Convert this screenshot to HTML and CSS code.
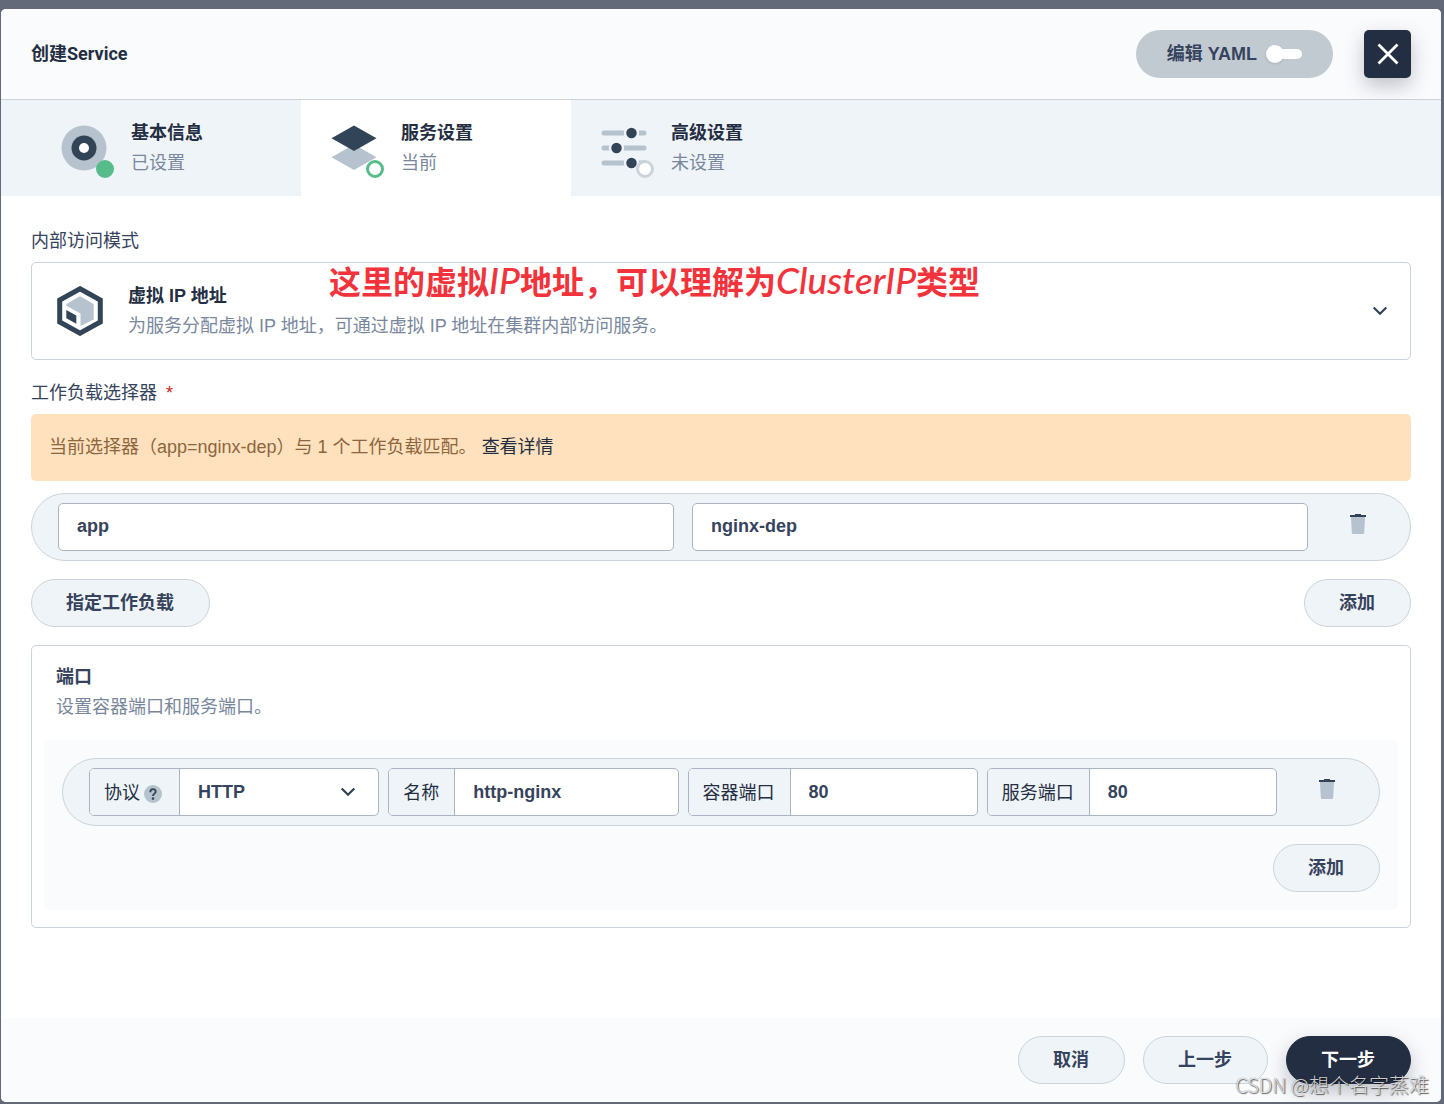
FILE: index.html
```html
<!DOCTYPE html>
<html lang="zh-CN">
<head>
<meta charset="utf-8">
<meta name="viewport" content="width=device-width, initial-scale=1">
<title>创建Service</title>
<link rel="stylesheet" href="styles.css">
</head>
<body>
<div class="modal" role="dialog" aria-labelledby="modal-title">
  <header class="modal-header">
    <h1 class="modal-title" id="modal-title">创建Service</h1>
    <label class="yaml-toggle" for="yaml">编辑 YAML<input class="switch" type="checkbox" role="switch" id="yaml"></label>
    <button class="close" type="button" aria-label="关闭">
      <svg width="24" height="24" viewBox="0 0 24 24" fill="none" stroke="#fff" stroke-width="2.8"><path d="M2.500 2.500l19 19M21.500 2.500l-19 19"/></svg>
    </button>
  </header>

  <nav class="steps">
    <a class="step" href="#basic">
      <span class="step-icon">
        <svg width="46" height="46" viewBox="0 0 46 46"><circle cx="23" cy="23" r="22.500" fill="#b6c2cd"/><circle cx="23" cy="23" r="12.500" fill="#324558"/><circle cx="23" cy="23" r="5" fill="#fff"/></svg>
        <span class="badge badge-done"></span>
      </span>
      <span class="step-text"><strong class="title">基本信息</strong><span class="desc">已设置</span></span>
    </a>
    <a class="step step-current" href="#service" aria-current="step">
      <span class="step-icon">
        <svg width="46" height="46" viewBox="0 0 46 46"><path d="M23 19.500L45.500 32.300 23 45 .5 32.300z" fill="#b6c2cd"/><path d="M23 .5L45.500 13.300 23 26 .5 13.300z" fill="#324558"/></svg>
        <span class="badge badge-current"></span>
      </span>
      <span class="step-text"><strong class="title">服务设置</strong><span class="desc">当前</span></span>
    </a>
    <a class="step" href="#advanced">
      <span class="step-icon">
        <svg width="46" height="46" viewBox="0 0 46 46"><g stroke="#b6c2cd" stroke-width="5" stroke-linecap="round"><path d="M3 8h40M3 23h40M3 38h40"/></g><g fill="#324558" stroke="#eff4f9" stroke-width="2.500"><circle cx="30.500" cy="8" r="6.500"/><circle cx="15.500" cy="23" r="6.500"/><circle cx="30.500" cy="38" r="6.500"/></g></svg>
        <span class="badge badge-todo"></span>
      </span>
      <span class="step-text"><strong class="title">高级设置</strong><span class="desc">未设置</span></span>
    </a>
  </nav>

  <main class="modal-body">
    <p class="annotation">这里的虚拟<i>IP</i>地址，可以理解为<i>ClusterIP</i>类型</p>

    <div class="form-label" id="mode-label">内部访问模式</div>
    <button class="mode" type="button" aria-haspopup="listbox" aria-describedby="mode-label">
      <svg class="mode-icon" width="48" height="50" viewBox="0 0 48 50"><path d="M24 2.800L44.300 14v22L24 47.200 3.700 36V14z" fill="none" stroke="#324558" stroke-width="5"/><path d="M24 10.300L37.700 18v15.500L24.500 40V27.500L10.300 19.700V18z" fill="#b6c2cd"/><path d="M10.300 24l10 5.600v8.200l-10-5.600z" fill="#324558"/></svg>
      <span class="mode-text"><strong class="title">虚拟 IP 地址</strong><span class="desc">为服务分配虚拟 IP 地址，可通过虚拟 IP 地址在集群内部访问服务。</span></span>
      <svg width="16" height="10" viewBox="0 0 16 10" fill="none" stroke="#324558" stroke-width="2.200"><path d="M1.700 1.500L8 7.800l6.300-6.300"/></svg>
    </button>

    <div class="form-label form-label-next">工作负载选择器 <span class="required">*</span></div>
    <div class="alert">当前选择器（app=nginx-dep）与 1 个工作负载匹配。 <a class="alert-link" href="#detail">查看详情</a></div>

    <div class="pill-row selector-row">
      <input class="input" type="text" value="app" aria-label="键">
      <input class="input" type="text" value="nginx-dep" aria-label="值">
      <button class="delete" type="button" aria-label="删除">
        <svg width="18" height="22" viewBox="0 0 18 22"><path d="M2 4h14l-.8 15.500q-.1 1.500-1.600 1.500H4.400q-1.500 0-1.600-1.500z" fill="#b6c2cd"/><path d="M6 1h6v1h5v2H1V2h5z" fill="#324558"/></svg>
      </button>
    </div>
    <div class="actions">
      <button class="btn" type="button">指定工作负载</button>
      <button class="btn" type="button">添加</button>
    </div>

    <section class="ports">
      <div class="ports-head"><h2 class="title ports-title">端口</h2><span class="desc">设置容器端口和服务端口。</span></div>
      <div class="ports-body">
        <div class="pill-row port-row">
          <div class="field">
            <label class="field-label" for="protocol">协议<svg class="help" width="18" height="18" viewBox="0 0 18 18"><circle cx="9" cy="9" r="9" fill="#b6c2cd"/><path d="M6.300 7.200C6.300 3.200 11.700 3.300 11.700 6.700 11.700 8.600 9 8.700 9 11" fill="none" stroke="#324558" stroke-width="1.900"/><circle cx="9" cy="13.600" r="1.300" fill="#324558"/></svg></label>
            <div class="select-wrap">
              <select class="control" id="protocol"><option>HTTP</option><option>TCP</option><option>UDP</option></select>
              <svg class="chevron" width="16" height="10" viewBox="0 0 16 10" fill="none" stroke="#324558" stroke-width="2.200"><path d="M1.700 1.500L8 7.800l6.300-6.300"/></svg>
            </div>
          </div>
          <div class="field"><label class="field-label" for="name">名称</label><input class="control" type="text" id="name" value="http-nginx"></div>
          <div class="field"><label class="field-label" for="cport">容器端口</label><input class="control" type="text" id="cport" value="80"></div>
          <div class="field"><label class="field-label" for="sport">服务端口</label><input class="control" type="text" id="sport" value="80"></div>
          <button class="delete" type="button" aria-label="删除">
            <svg width="18" height="22" viewBox="0 0 18 22"><path d="M2 4h14l-.8 15.500q-.1 1.500-1.600 1.500H4.400q-1.500 0-1.600-1.500z" fill="#b6c2cd"/><path d="M6 1h6v1h5v2H1V2h5z" fill="#324558"/></svg>
          </button>
        </div>
        <div class="ports-actions"><button class="btn" type="button">添加</button></div>
      </div>
    </section>
  </main>

  <footer class="modal-footer">
    <button class="btn" type="button">取消</button>
    <button class="btn" type="button">上一步</button>
    <button class="btn btn-primary" type="button">下一步</button>
  </footer>
  <div class="watermark">CSDN @想个名字蒸难</div>
</div>
</body>
</html>
```
FILE: styles.css
```css
* { box-sizing: border-box; }

body {
  margin: 0;
  padding: 9px 3px 2px 1px;
  background: #636979;
  color: #36435c;
  font: 18px/30px "Liberation Sans", "Noto Sans CJK SC", sans-serif;
}

button, input, select { font: inherit; color: inherit; margin: 0; }
button { cursor: pointer; }
svg { display: block; flex: none; }

.modal {
  position: relative;
  display: flex;
  flex-direction: column;
  min-height: calc(100vh - 11px);
  background: #fff;
  border-radius: 5px;
  overflow: hidden;
}

.modal-header {
  display: flex;
  align-items: center;
  padding: 21px 30px;
  background: #fafbfd;
  border-bottom: 1px solid #ccd3db;
}
.modal-title {
  flex: 1;
  margin: 0;
  color: #242e42;
  font: bold 18px/30px Roboto, "Noto Sans CJK SC", sans-serif;
}
.yaml-toggle {
  display: flex;
  align-items: center;
  gap: 9px;
  height: 48px;
  margin-right: 31px;
  padding: 0 31px;
  border-radius: 24px;
  background: #c1c9d1;
  font-weight: bold;
}
.switch {
  appearance: none;
  display: flex;
  align-items: center;
  width: 36px;
  height: 18px;
  background: linear-gradient(#fff, #fff) 5px 4px / 20px 10px no-repeat;
}
.switch::before {
  content: "";
  width: 18px;
  height: 18px;
  border-radius: 50%;
  background: #fff;
  box-shadow: 0 1px 3px rgba(36, 46, 66, .15);
}
.switch::after {
  content: "";
  width: 18px;
  height: 10px;
  border-radius: 0 5px 5px 0;
  background: #fff;
}
.close {
  display: flex;
  align-items: center;
  justify-content: center;
  width: 47px;
  height: 48px;
  padding: 0;
  border: 0;
  border-radius: 5px;
  background: #242e42;
  box-shadow: 0 8px 20px rgba(36, 46, 66, .28);
}

.steps {
  display: flex;
  padding-left: 30px;
  background: #eff4f9;
}
.step {
  display: flex;
  gap: 24px;
  width: 270px;
  padding: 18px 30px;
  color: inherit;
  text-decoration: none;
}
.step-current { background: #fff; }
.step-icon { position: relative; padding-top: 7px; }
.step-text, .mode-text { display: flex; flex-direction: column; }
.badge {
  position: absolute;
  top: 42px;
  left: 35px;
  width: 18px;
  height: 18px;
  border-radius: 50%;
  border: 3px solid #55bc8a;
  background: #fff;
}
.badge-done { background: #55bc8a; }
.badge-todo { border-color: #ccd3db; }
.title { color: #242e42; font-weight: bold; }
.desc { color: #79879c; }

.modal-body {
  position: relative;
  flex: 1;
  padding: 30px;
}
.annotation {
  position: absolute;
  top: 60px;
  left: 328px;
  margin: 0;
  color: #f2333b;
  font: bold 32px/48px "Noto Sans CJK SC", sans-serif;
  white-space: nowrap;
}
.annotation i { font: italic 500 37px/40px Lato, sans-serif; }

.form-label { margin-bottom: 6px; }
.form-label-next { margin-top: 18px; }
.required { margin-left: 4px; color: #ca2621; }

.mode {
  display: flex;
  align-items: center;
  gap: 24px;
  width: 100%;
  padding: 18px 22px 18px 24px;
  border: 1px solid #ccd3db;
  border-radius: 5px;
  background: #fff;
  text-align: left;
}
.mode-text { flex: 1; }

.alert {
  padding: 18px 18px 19px;
  border-radius: 5px;
  background: #ffe1be;
  color: #8d663e;
}
.alert-link { color: #242e42; text-decoration: none; }

.pill-row {
  display: flex;
  padding: 9px 0 9px 26px;
  border: 1px solid #ccd3db;
  border-radius: 34px;
  background: #eff4f9;
}
.selector-row { gap: 18px; margin: 12px 0 18px; }
.input {
  flex: 1;
  min-width: 0;
  height: 48px;
  padding: 0 18px 2px;
  border: 1px solid #abb4be;
  border-radius: 5px;
  background: #fff;
  font-weight: bold;
}
.delete {
  display: flex;
  justify-content: center;
  width: 102px;
  padding: 10px 2px 10px 0;
  border: 0;
  background: none;
}
.selector-row .delete { margin-left: -18px; }
.port-row .delete { margin-left: -9px; }

.actions { display: flex; justify-content: space-between; }
.btn {
  height: 48px;
  padding: 0 35px 0 34px;
  border: 1px solid #ccd3db;
  border-radius: 24px;
  background: #eff4f9;
  font-weight: bold;
}
.btn-primary {
  border-color: #242e42;
  background: #242e42;
  color: #fff;
  box-shadow: 0 8px 20px rgba(36, 46, 66, .28);
}

.ports {
  margin-top: 18px;
  padding: 16px 12px 17px;
  border: 1px solid #ccd3db;
  border-radius: 5px;
}
.ports-head { padding: 0 12px 18px; }
.ports-title { margin: 0; color: #36435c; font-size: 18px; }
.ports-body {
  padding: 18px;
  border-radius: 5px;
  background: #fafbfd;
}
.ports-actions {
  display: flex;
  justify-content: flex-end;
  margin-top: 18px;
}
.port-row { gap: 9px; }
.field {
  display: flex;
  flex: 1;
  min-width: 0;
  height: 48px;
  border: 1px solid #abb4c3;
  border-radius: 5px;
  background: #fff;
  overflow: hidden;
}
.field-label {
  display: flex;
  align-items: center;
  gap: 4px;
  padding: 2px 15px 0 14px;
  border-right: 1px solid #abb4c3;
  background: #eff4f9;
  color: #242e42;
  white-space: nowrap;
}
.help { margin: 2px 2px 0 0; }
.select-wrap { position: relative; display: flex; flex: 1; }
.control {
  flex: 1;
  width: 0;
  min-width: 0;
  padding: 0 18px;
  border: 0;
  background: none;
  appearance: none;
  font-weight: bold;
}
.chevron { position: absolute; top: 18px; right: 22px; pointer-events: none; }

.modal-footer {
  display: flex;
  justify-content: flex-end;
  gap: 18px;
  padding: 18px 30px;
  background: #fafbfd;
}

.watermark {
  position: absolute;
  right: 12px;
  bottom: 2px;
  color: rgba(255, 255, 255, .8);
  font: 300 20px/30px "Noto Sans CJK SC", sans-serif;
  text-shadow: 1px 1px 1px rgba(0, 0, 0, .6), 0 0 1px rgba(0, 0, 0, .5);
  pointer-events: none;
}
```
